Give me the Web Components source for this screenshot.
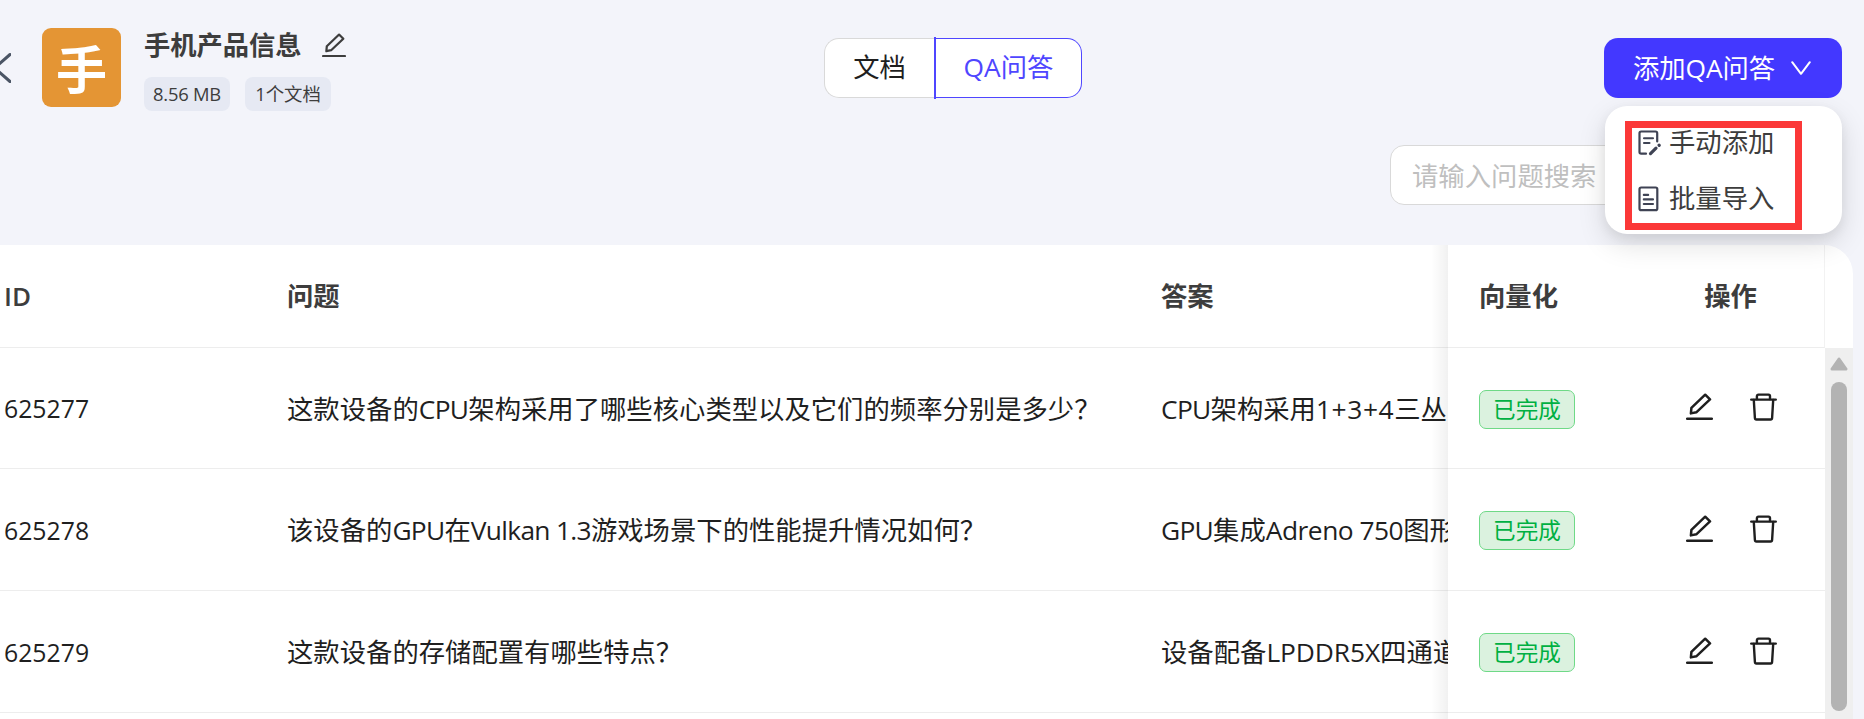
<!DOCTYPE html>
<html lang="zh-CN">
<head>
<meta charset="UTF-8">
<title>手机产品信息</title>
<style>
    body {
        margin: 0;
        height: 719px;
        overflow: hidden;
        background: #f3f4fa;
        color: #1f1f1f;
        font-family: 'Open Sans', 'Noto Sans CJK SC', sans-serif;
        font-size: 26.35px;
    }
</style>
</head>
<body>
<qa-page></qa-page>

<script>
const ICONS = {
    edit: {
        box: '0 0 27 28',
        body: `<path d="M1.2 25.8H25.8" stroke-width="2.5"/>
               <path d="M19.2 1.7L24 6.4L10.3 19.3L4.9 20.4L5.4 14.9Z" stroke-width="2.5"/>`
    },
    trash: {
        box: '0 0 27 28',
        body: `<path d="M1.2 6.6H25.8" stroke-width="2.4"/>
               <path d="M6.9 6V3.2Q6.9 1.6 8.5 1.6H18.5Q20 1.6 20 3.2V6M3.8 7L4.9 25Q5 26.5 6.4 26.5H20.6Q22 26.5 22.1 25L23.2 7" stroke-width="2.4"/>`
    },
    back: {
        box: '0 0 18 30',
        body: '<path d="M17 1.5L1.5 15L17 28.5" stroke-width="3"/>'
    },
    down: {
        box: '0 0 20 15',
        body: '<path d="M1.2 1.2L10 12.8L18.8 1.2" stroke-width="2"/>'
    },
    manual: {
        box: '0 0 23 26',
        body: `<path d="M19.2 11.5V3.2Q19.2 1.5 17.5 1.5H3.2Q1.5 1.5 1.5 3.2V22Q1.5 23.7 3.2 23.7H8" stroke-width="2.2"/>
               <path d="M6 8.3H15M6 13H11.5" stroke-width="2.1"/>
               <path d="M12.5 23.6L18 18.2" stroke-width="3.2"/>
               <path d="M21.1 15.2L21.2 15.3" stroke-width="3.2"/>`
    },
    batch: {
        box: '0 0 23 26',
        body: `<rect x="1.5" y="1.5" width="17.8" height="22.6" rx="1.7" stroke-width="2.2"/>
               <path d="M5.8 8.9H10.2M5.8 13.4H15M5.8 18H15" stroke-width="2.1"/>`
    }
};

class AppIcon extends HTMLElement {
    connectedCallback() {
        const icon = ICONS[this.getAttribute('name')];
        this.attachShadow({mode: 'open'}).innerHTML = /*html*/`
        <style>
            :host { display: block; flex: none; }
            svg { display: block; width: 100%; height: 100%; }
        </style>
        <svg viewBox="${icon.box}" fill="none" stroke="currentColor" stroke-linecap="round" stroke-linejoin="round">${icon.body}</svg>
        `;
    }
}
customElements.define('app-icon', AppIcon);

class BaseInfo extends HTMLElement {
    constructor() {
        super();
        this.attachShadow({mode: 'open'}).innerHTML = /*html*/`
        <style>
            :host { display: flex; align-items: flex-start; color: #3d3d3d; }
            .back { width: 18px; height: 30px; margin: 25px 31px 0 -7px; color: #4b5565; }
            .avatar {
                width: 79px;
                height: 79px;
                border-radius: 9px;
                background: #e49534;
                color: #fff;
                font: bold 51px/79px 'Noto Sans CJK SC', sans-serif;
                text-align: center;
                margin-right: 23px;
            }
            .title { display: flex; align-items: center; height: 32px; padding-bottom: 4px; font-size: 26.25px; font-weight: bold; white-space: nowrap; }
            .title app-icon { width: 24px; height: 25px; margin: 2px 0 0 20px; }
            .tags { display: flex; gap: 15px; margin-top: 13px; }
            .tags span {
                box-sizing: border-box;
                width: 86px;
                height: 34px;
                line-height: 34px;
                border-radius: 8px;
                background: #e6e9f3;
                font-size: 18.4px;
                text-align: center;
                white-space: nowrap;
            }
            .size { letter-spacing: -0.25px; }
        </style>
        <app-icon class="back" name="back"></app-icon>
        <div class="avatar">手</div>
        <div>
            <div class="title"><slot></slot><app-icon name="edit"></app-icon></div>
            <div class="tags"><span class="size">8.56 MB</span><span>1个文档</span></div>
        </div>
        `;
    }
}
customElements.define('base-info', BaseInfo);

class TabSwitch extends HTMLElement {
    constructor() {
        super();
        this.attachShadow({mode: 'open'}).innerHTML = /*html*/`
        <style>
            :host { display: flex; align-items: center; width: 258px; height: 62px; line-height: 57px; text-align: center; }
            div { box-sizing: border-box; height: 60px; background: #fff; border: 1px solid #d9d9d9; }
            .left { width: 110px; border-right: 0; border-radius: 15px 0 0 15px; }
            .bar { width: 2px; height: 62px; border: 0; background: #4f46ff; }
            .right { width: 146px; border-color: #4f46ff; border-left: 0; border-radius: 0 15px 15px 0; color: #4f46ff; }
        </style>
        <div class="left"><slot name="first"></slot></div>
        <div class="bar"></div>
        <div class="right"><slot name="second"></slot></div>
        `;
    }
}
customElements.define('tab-switch', TabSwitch);

class AddMenu extends HTMLElement {
    constructor() {
        super();
        this.attachShadow({mode: 'open'}).innerHTML = /*html*/`
        <style>
            :host { display: block; position: relative; width: 238px; height: 60px; z-index: 5; }
            .button {
                box-sizing: border-box;
                display: flex;
                align-items: center;
                height: 60px;
                padding: 0 31px 0 29px;
                justify-content: space-between;
                border-radius: 14px;
                background: #4338ff;
                color: #fff;
                letter-spacing: -0.1px;
                white-space: nowrap;
            }
            .button span { margin-top: -3px; }
            .button app-icon { width: 20px; height: 15px; }
            /* dropdown floats over the search box and the table */
            .menu {
                position: absolute;
                top: 68px;
                left: 1px;
                box-sizing: border-box;
                width: 237px;
                height: 128px;
                padding: 15px 0 0 20px;
                border-radius: 22px;
                background: #fff;
                box-shadow: 0 10px 28px rgba(0, 0, 0, .13), 0 4px 12px rgba(0, 0, 0, .06);
            }
            .frame {
                box-sizing: border-box;
                width: 177px;
                height: 109px;
                border: 7px solid #fb3838;
                padding-left: 6px;
            }
            .item { display: flex; align-items: center; height: 27px; line-height: 27px; color: #3d3d3d; white-space: nowrap; }
            .item:first-child { padding-top: 1px; }
            .item + .item { margin-top: 29px; }
            .item app-icon { width: 23px; height: 26px; margin-right: 8px; color: #3f4354; }
        </style>
        <div class="button"><span><slot></slot></span><app-icon name="down"></app-icon></div>
        <div class="menu">
            <div class="frame">
                <div class="item"><app-icon name="manual"></app-icon>手动添加</div>
                <div class="item"><app-icon name="batch"></app-icon>批量导入</div>
            </div>
        </div>
        `;
    }
}
customElements.define('add-menu', AddMenu);

class SearchBox extends HTMLElement {
    constructor() {
        super();
        this.attachShadow({mode: 'open'}).innerHTML = /*html*/`
        <style>
            :host {
                display: block;
                box-sizing: border-box;
                width: 452px;
                height: 60px;
                padding-left: 21px;
                border: 1px solid #d9d9d9;
                border-radius: 14px;
                background: #fff;
                color: #bfbfbf;
                line-height: 60px;
                white-space: nowrap;
            }
        </style>
        <slot></slot>
        `;
    }
}
customElements.define('search-box', SearchBox);

class StatusTag extends HTMLElement {
    constructor() {
        super();
        this.attachShadow({mode: 'open'}).innerHTML = /*html*/`
        <style>
            :host {
                display: block;
                box-sizing: border-box;
                width: 96px;
                height: 39.4px;
                margin-top: 2.4px;
                border: 1px solid #6fd987;
                border-radius: 7px;
                background: #dbf2df;
                color: #00b042;
                font-size: 22.6px;
                line-height: 37px;
                text-align: center;
                white-space: nowrap;
            }
        </style>
        <slot></slot>
        `;
    }
}
customElements.define('status-tag', StatusTag);

class QaRow extends HTMLElement {
    connectedCallback() {
        this.attachShadow({mode: 'open'}).innerHTML = /*html*/`
        <style>
            :host { display: grid; grid-template-columns: 287px 874px 287px 377px; height: 122px; box-sizing: border-box; }
            :host(:first-child) { height: 121px; }
            .cell {
                display: flex;
                align-items: center;
                border-bottom: 1px solid #ededed;
                box-sizing: border-box;
                overflow: hidden;
                white-space: nowrap;
                padding-bottom: 2px;
            }
            .id { padding: 0 0 0 4px; font-size: 24.8px; }
            .fixed { padding: 0 0 0 31px; background: #fff; }
            .edit { width: 27px; height: 28px; margin: -2px 0 0 111px; }
            .trash { width: 27px; height: 28px; margin: -2px 0 0 37px; }
        </style>
        <div class="cell id">${this.getAttribute('row-id')}</div>
        <div class="cell"><slot name="question"></slot></div>
        <div class="cell"><slot name="answer"></slot></div>
        <div class="cell fixed">
            <status-tag>已完成</status-tag>
            <app-icon class="edit" name="edit"></app-icon>
            <app-icon class="trash" name="trash"></app-icon>
        </div>
        `;
    }
}
customElements.define('qa-row', QaRow);

class QaTable extends HTMLElement {
    constructor() {
        super();
        this.attachShadow({mode: 'open'}).innerHTML = /*html*/`
        <style>
            :host {
                display: block;
                position: relative;
                width: 1853px;
                height: 474px;
                background: #fff;
                border-radius: 0 29px 0 0;
                overflow: hidden;
            }
            .head {
                box-sizing: border-box;
                display: grid;
                grid-template-columns: 283px 874px 318px 158px 187px;
                align-items: center;
                width: 1825px;
                height: 103px;
                padding: 0 0 3px 4px;
                border-bottom: 1px solid #ededed;
                border-right: 1px solid #f2f2f2;
                color: #3d3d3d;
                font-weight: bold;
            }
            .head span:first-child { padding-top: 3px; font-weight: 600; font-size: 26px; }
            .head .ops { text-align: center; }
            .body { display: flex; }
            .rows { width: 1825px; }
            .scroll { width: 28px; height: 371px; background: #efefef; display: flex; flex-direction: column; align-items: center; }
            .scroll svg { width: 18px; height: 14px; margin-top: 9px; }
            .thumb { width: 16px; height: 329px; margin-top: 11px; border-radius: 8px; background: #b3b3b3; }
            /* shadow cast by the fixed columns on the scrolled ones */
            .shade { position: absolute; top: 0; left: 1431px; width: 17px; height: 100%; background: linear-gradient(to right, rgba(0,0,0,0), rgba(0,0,0,.055)); }
        </style>
        <div class="head"><span>ID</span><span>问题</span><span>答案</span><span>向量化</span><span class="ops">操作</span></div>
        <div class="body">
            <div class="rows"><slot></slot></div>
            <div class="scroll">
                <svg viewBox="0 0 18 14"><path d="M9 2L16 12H2Z" fill="#b3b3b3" stroke="#b3b3b3" stroke-width="3" stroke-linejoin="round"/></svg>
                <div class="thumb"></div>
            </div>
        </div>
        <div class="shade"></div>
        `;
    }
}
customElements.define('qa-table', QaTable);

class QaPage extends HTMLElement {
    constructor() {
        super();
        this.attachShadow({mode: 'open'}).innerHTML = /*html*/`
        <style>
            :host { display: block; width: 1864px; height: 719px; overflow: hidden; }
            header { display: grid; grid-template-columns: 824px 780px 238px; height: 117px; padding-top: 28px; box-sizing: border-box; }
            tab-switch { margin-top: 9px; }
            add-menu { margin-top: 10px; }
            search-box { margin: 28px 0 40px 1390px; }
            .tight { letter-spacing: -0.7px; }
            .loose { letter-spacing: 0.6px; }
        </style>
        <header>
            <base-info>手机产品信息</base-info>
            <tab-switch><span slot="first">文档</span><span slot="second">QA问答</span></tab-switch>
            <add-menu>添加QA问答</add-menu>
        </header>
        <search-box>请输入问题搜索</search-box>
        <qa-table>
            <qa-row row-id="625277">
                <span slot="question">这款设备的<span class="tight">CPU</span>架构采用了哪些核心类型以及它们的频率分别是多少？</span>
                <span slot="answer"><span class="tight">CPU</span>架构采用<span class="loose">1+3+4</span>三丛</span>
            </qa-row>
            <qa-row row-id="625278">
                <span slot="question">该设备的<span class="tight">GPU</span>在<span class="tight">Vulkan 1.3</span>游戏场景下的性能提升情况如何？</span>
                <span slot="answer"><span class="tight">GPU</span>集成<span style="letter-spacing: -0.5px">Adreno 750</span>图形</span>
            </qa-row>
            <qa-row row-id="625279">
                <span slot="question">这款设备的存储配置有哪些特点？</span>
                <span slot="answer">设备配备<span style="letter-spacing: -0.1px">LPDDR5X</span>四通道</span>
            </qa-row>
        </qa-table>
        `;
    }
}
customElements.define('qa-page', QaPage);
</script>
</body>
</html>
